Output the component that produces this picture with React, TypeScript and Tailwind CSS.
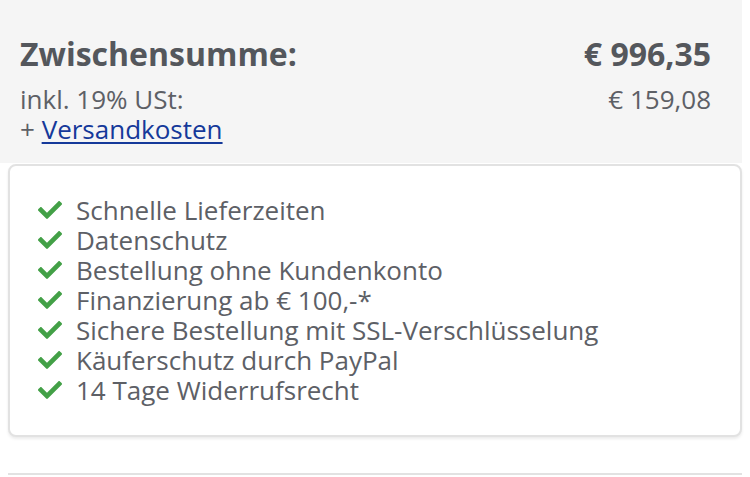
import { FaCheck } from "react-icons/fa";

const perks = [
  "Schnelle Lieferzeiten",
  "Datenschutz",
  "Bestellung ohne Kundenkonto",
  "Finanzierung ab € 100,-*",
  "Sichere Bestellung mit SSL-Verschlüsselung",
  "Käuferschutz durch PayPal",
  "14 Tage Widerrufsrecht",
];

export default function App() {
  return (
    <div className="w-[750px] h-[477px] overflow-hidden bg-white text-[#5d6066] font-['Open_Sans',sans-serif]">
      <div className="w-[742px] h-[163px] bg-[#f5f5f5] pl-5 pr-[31px] pt-[35px]">
        <div className="flex justify-between items-center text-[32px] leading-[38px] font-bold text-[#54575c]">
          <span>Zwischensumme:</span>
          <span>€ 996,35</span>
        </div>
        <div className="mt-[11px] flex justify-between text-[26px] leading-[30px]">
          <span>inkl. 19% USt:</span>
          <span>€ 159,08</span>
        </div>
        <div className="text-[26px] leading-[30px]">
          +{" "}
          <a href="#" className="text-[#15399a] underline decoration-2 underline-offset-[3px]">
            Versandkosten
          </a>
        </div>
      </div>

      <div className="mx-2 mt-px rounded-lg border-2 border-[#e2e2e2] bg-white pl-[28px] pt-[29px] pb-[30px] shadow-[0_2px_3px_rgba(0,0,0,0.08)]">
        <ul className="text-[26px] leading-[30px]">
          {perks.map((p) => (
            <li key={p} className="flex items-center gap-[14px]">
              <FaCheck className="text-[#43a047] shrink-0" size={24} />
              <span>{p}</span>
            </li>
          ))}
        </ul>
      </div>

      <div className="mx-2 mt-[36px] border-t-2 border-[#e2e2e2]" />
    </div>
  );
}
